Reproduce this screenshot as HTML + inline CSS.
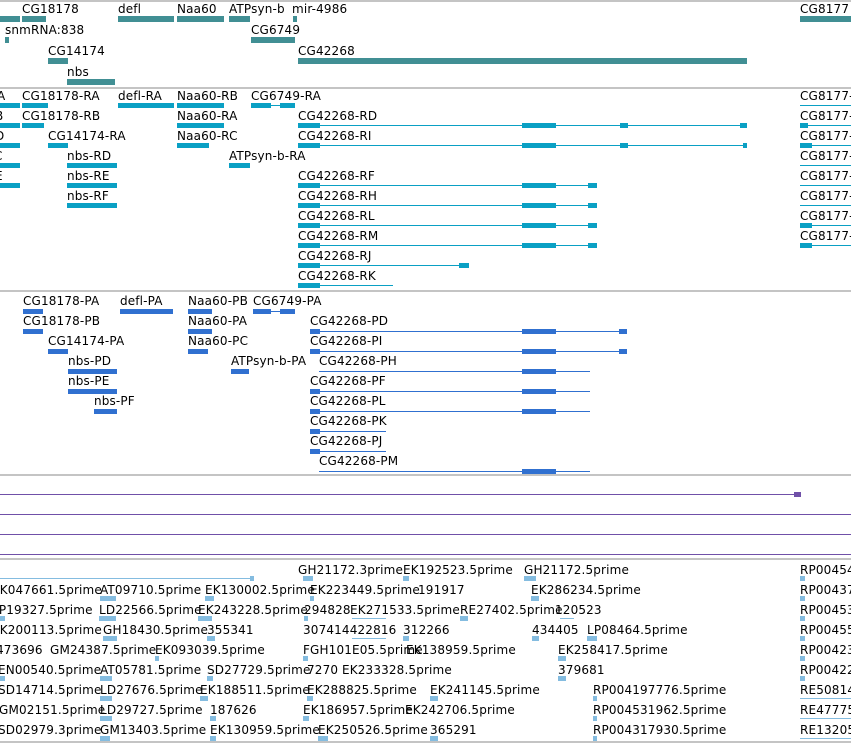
<!DOCTYPE html>
<html><head><meta charset="utf-8"><style>
body{margin:0;width:851px;height:743px;overflow:hidden;background:#fff;position:relative;font-family:"DejaVu Sans","Liberation Sans",sans-serif}
.t{position:absolute;font-size:12px;line-height:14px;white-space:nowrap;color:#000;margin-top:1px;letter-spacing:0.15px}
.b{position:absolute}
.w{position:absolute;left:0;top:0;width:851px;height:743px}
.g{position:absolute;left:0;width:851px;height:2px;background:#c4c4c4}
.c1{background:#418f94}.c2{background:#0aa0c4}.c3{background:#3070d0}.c5{background:#84bce0}.cp{background:#7050a8}
.h1{height:6px}.h2{height:5px}.ln{height:1px}
</style></head><body>
<div class="g" style="top:0"></div>
<div class="g" style="top:87px"></div>
<div class="g" style="top:290px"></div>
<div class="g" style="top:474px"></div>
<div class="g" style="top:558px"></div>
<div class="g" style="top:741px"></div>

<!-- track1 -->
<div class="t" style="left:22px;top:1px">CG18178</div>
<div class="t" style="left:118px;top:1px">defl</div>
<div class="t" style="left:177px;top:1px">Naa60</div>
<div class="t" style="left:229px;top:1px">ATPsyn-b</div>
<div class="t" style="left:292px;top:1px">mir-4986</div>
<div class="t" style="left:800px;top:1px">CG8177</div>
<div class="b c1 h1" style="left:0;top:16px;width:20px"></div>
<div class="b c1 h1" style="left:22px;top:16px;width:24px"></div>
<div class="b c1 h1" style="left:118px;top:16px;width:56px"></div>
<div class="b c1 h1" style="left:177px;top:16px;width:47px"></div>
<div class="b c1 h1" style="left:229px;top:16px;width:21px"></div>
<div class="b c1 h1" style="left:293px;top:16px;width:4px"></div>
<div class="b c1 h1" style="left:800px;top:16px;width:51px"></div>
<div class="t" style="left:5px;top:22px">snmRNA:838</div>
<div class="b c1 h1" style="left:5px;top:37px;width:4px"></div>
<div class="t" style="left:251px;top:22px">CG6749</div>
<div class="b c1 h1" style="left:251px;top:37px;width:44px"></div>
<div class="t" style="left:48px;top:43px">CG14174</div>
<div class="b c1 h1" style="left:48px;top:58px;width:20px"></div>
<div class="t" style="left:298px;top:43px">CG42268</div>
<div class="b c1 h1" style="left:298px;top:58px;width:449px"></div>
<div class="t" style="left:67px;top:64px">nbs</div>
<div class="b c1 h1" style="left:67px;top:79px;width:48px"></div>

<!-- track2 -->
<div class="t" style="left:-3px;top:88px">A</div>
<div class="t" style="left:22px;top:88px">CG18178-RA</div>
<div class="t" style="left:118px;top:88px">defl-RA</div>
<div class="t" style="left:177px;top:88px">Naa60-RB</div>
<div class="t" style="left:251px;top:88px">CG6749-RA</div>
<div class="b c2 h2" style="left:0;top:103px;width:20px"></div>
<div class="b c2 h2" style="left:22px;top:103px;width:26px"></div>
<div class="b c2 h2" style="left:118px;top:103px;width:56px"></div>
<div class="b c2 h2" style="left:177px;top:103px;width:47px"></div>
<div class="b c2 h2" style="left:251px;top:103px;width:20px"></div>
<div class="b c2 ln" style="left:271px;top:105px;width:24px"></div>
<div class="b c2 h2" style="left:280px;top:103px;width:15px"></div>

<div class="t" style="left:-5px;top:108px">B</div>
<div class="t" style="left:22px;top:108px">CG18178-RB</div>
<div class="t" style="left:177px;top:108px">Naa60-RA</div>
<div class="b c2 h2" style="left:0;top:123px;width:20px"></div>
<div class="b c2 h2" style="left:22px;top:123px;width:22px"></div>
<div class="b c2 h2" style="left:177px;top:123px;width:47px"></div>

<div class="t" style="left:-5px;top:128px">D</div>
<div class="t" style="left:48px;top:128px">CG14174-RA</div>
<div class="t" style="left:177px;top:128px">Naa60-RC</div>
<div class="b c2 h2" style="left:0;top:143px;width:20px"></div>
<div class="b c2 h2" style="left:48px;top:143px;width:20px"></div>
<div class="b c2 h2" style="left:177px;top:143px;width:32px"></div>

<div class="t" style="left:-6px;top:148px">C</div>
<div class="t" style="left:67px;top:148px">nbs-RD</div>
<div class="t" style="left:229px;top:148px">ATPsyn-b-RA</div>
<div class="b c2 h2" style="left:0;top:163px;width:20px"></div>
<div class="b c2 h2" style="left:67px;top:163px;width:50px"></div>
<div class="b c2 h2" style="left:229px;top:163px;width:21px"></div>
<div class="t" style="left:-5px;top:168px">E</div>
<div class="t" style="left:67px;top:168px">nbs-RE</div>
<div class="b c2 h2" style="left:0;top:183px;width:20px"></div>
<div class="b c2 h2" style="left:67px;top:183px;width:50px"></div>
<div class="t" style="left:67px;top:188px">nbs-RF</div>
<div class="b c2 h2" style="left:67px;top:203px;width:50px"></div>

<div class="t" style="left:298px;top:108px">CG42268-RD</div>
<div class="b c2 ln" style="left:298px;top:125px;width:449px"></div>
<div class="t" style="left:298px;top:128px">CG42268-RI</div>
<div class="b c2 ln" style="left:298px;top:145px;width:449px"></div>
<div class="t" style="left:298px;top:168px">CG42268-RF</div>
<div class="b c2 ln" style="left:298px;top:185px;width:299px"></div>
<div class="t" style="left:298px;top:188px">CG42268-RH</div>
<div class="b c2 ln" style="left:298px;top:205px;width:299px"></div>
<div class="t" style="left:298px;top:208px">CG42268-RL</div>
<div class="b c2 ln" style="left:298px;top:225px;width:299px"></div>
<div class="t" style="left:298px;top:228px">CG42268-RM</div>
<div class="b c2 ln" style="left:298px;top:245px;width:299px"></div>
<div class="t" style="left:298px;top:248px">CG42268-RJ</div>
<div class="b c2 ln" style="left:298px;top:265px;width:171px"></div>
<div class="b c2 h2" style="left:459px;top:263px;width:10px"></div>
<div class="t" style="left:298px;top:268px">CG42268-RK</div>
<div class="b c2 ln" style="left:298px;top:285px;width:95px"></div>
<div class="b c2 h2" style="left:298px;top:283px;width:22px"></div>
<div class="b c2 h2" style="left:298px;top:123px;width:22px"></div>
<div class="b c2 h2" style="left:298px;top:143px;width:22px"></div>
<div class="b c2 h2" style="left:298px;top:183px;width:22px"></div>
<div class="b c2 h2" style="left:298px;top:203px;width:22px"></div>
<div class="b c2 h2" style="left:298px;top:223px;width:22px"></div>
<div class="b c2 h2" style="left:298px;top:243px;width:22px"></div>
<div class="b c2 h2" style="left:298px;top:263px;width:22px"></div>
<div class="b c2 h2" style="left:522px;top:123px;width:34px"></div>
<div class="b c2 h2" style="left:522px;top:143px;width:34px"></div>
<div class="b c2 h2" style="left:522px;top:183px;width:34px"></div>
<div class="b c2 h2" style="left:522px;top:203px;width:34px"></div>
<div class="b c2 h2" style="left:522px;top:223px;width:34px"></div>
<div class="b c2 h2" style="left:522px;top:243px;width:34px"></div>
<div class="b c2 h2" style="left:588px;top:183px;width:9px"></div>
<div class="b c2 h2" style="left:588px;top:203px;width:9px"></div>
<div class="b c2 h2" style="left:588px;top:223px;width:9px"></div>
<div class="b c2 h2" style="left:588px;top:243px;width:9px"></div>
<div class="b c2 h2" style="left:620px;top:123px;width:8px"></div>
<div class="b c2 h2" style="left:620px;top:143px;width:8px"></div>
<div class="b c2 h2" style="left:740px;top:123px;width:7px"></div>
<div class="b c2 h2" style="left:743px;top:143px;width:4px"></div>

<div class="t" style="left:800px;top:88px">CG8177-</div>
<div class="t" style="left:800px;top:108px">CG8177-</div>
<div class="t" style="left:800px;top:128px">CG8177-</div>
<div class="t" style="left:800px;top:148px">CG8177-</div>
<div class="t" style="left:800px;top:168px">CG8177-</div>
<div class="t" style="left:800px;top:188px">CG8177-</div>
<div class="t" style="left:800px;top:208px">CG8177-</div>
<div class="t" style="left:800px;top:228px">CG8177-</div>
<div class="b c2 ln" style="left:800px;top:105px;width:51px"></div>
<div class="b c2 ln" style="left:800px;top:125px;width:51px"></div>
<div class="b c2 ln" style="left:800px;top:145px;width:51px"></div>
<div class="b c2 ln" style="left:800px;top:165px;width:51px"></div>
<div class="b c2 ln" style="left:800px;top:185px;width:51px"></div>
<div class="b c2 ln" style="left:800px;top:205px;width:51px"></div>
<div class="b c2 ln" style="left:800px;top:225px;width:51px"></div>
<div class="b c2 ln" style="left:800px;top:245px;width:51px"></div>
<div class="b c2 h2" style="left:800px;top:123px;width:8px"></div>
<div class="b c2 h2" style="left:800px;top:143px;width:12px"></div>
<div class="b c2 h2" style="left:800px;top:223px;width:12px"></div>
<div class="b c2 h2" style="left:800px;top:243px;width:12px"></div>

<!-- track3 -->
<div class="w" style="top:1px">
<div class="t" style="left:23px;top:292px">CG18178-PA</div>
<div class="t" style="left:120px;top:292px">defl-PA</div>
<div class="t" style="left:188px;top:292px">Naa60-PB</div>
<div class="t" style="left:253px;top:292px">CG6749-PA</div>
<div class="b c3 h2" style="left:23px;top:308px;width:20px"></div>
<div class="b c3 h2" style="left:120px;top:308px;width:53px"></div>
<div class="b c3 h2" style="left:188px;top:308px;width:24px"></div>
<div class="b c3 h2" style="left:253px;top:308px;width:18px"></div>
<div class="b c3 ln" style="left:271px;top:310px;width:24px"></div>
<div class="b c3 h2" style="left:280px;top:308px;width:15px"></div>
<div class="t" style="left:23px;top:312px">CG18178-PB</div>
<div class="t" style="left:188px;top:312px">Naa60-PA</div>
<div class="b c3 h2" style="left:23px;top:328px;width:20px"></div>
<div class="b c3 h2" style="left:188px;top:328px;width:24px"></div>
<div class="t" style="left:48px;top:332px">CG14174-PA</div>
<div class="t" style="left:188px;top:332px">Naa60-PC</div>
<div class="b c3 h2" style="left:48px;top:348px;width:20px"></div>
<div class="b c3 h2" style="left:188px;top:348px;width:20px"></div>
<div class="t" style="left:68px;top:352px">nbs-PD</div>
<div class="t" style="left:231px;top:352px">ATPsyn-b-PA</div>
<div class="b c3 h2" style="left:68px;top:368px;width:49px"></div>
<div class="b c3 h2" style="left:231px;top:368px;width:18px"></div>
<div class="t" style="left:68px;top:372px">nbs-PE</div>
<div class="b c3 h2" style="left:68px;top:388px;width:49px"></div>
<div class="t" style="left:94px;top:392px">nbs-PF</div>
<div class="b c3 h2" style="left:94px;top:408px;width:23px"></div>

<div class="t" style="left:310px;top:312px">CG42268-PD</div>
<div class="t" style="left:310px;top:332px">CG42268-PI</div>
<div class="t" style="left:319px;top:352px">CG42268-PH</div>
<div class="t" style="left:310px;top:372px">CG42268-PF</div>
<div class="t" style="left:310px;top:392px">CG42268-PL</div>
<div class="t" style="left:310px;top:412px">CG42268-PK</div>
<div class="t" style="left:310px;top:432px">CG42268-PJ</div>
<div class="t" style="left:319px;top:452px">CG42268-PM</div>
<div class="b c3 ln" style="left:310px;top:330px;width:317px"></div>
<div class="b c3 ln" style="left:310px;top:350px;width:317px"></div>
<div class="b c3 ln" style="left:319px;top:370px;width:271px"></div>
<div class="b c3 ln" style="left:310px;top:390px;width:280px"></div>
<div class="b c3 ln" style="left:310px;top:410px;width:280px"></div>
<div class="b c3 ln" style="left:310px;top:430px;width:76px"></div>
<div class="b c3 ln" style="left:310px;top:450px;width:76px"></div>
<div class="b c3 ln" style="left:319px;top:470px;width:271px"></div>
<div class="b c3 h2" style="left:310px;top:328px;width:10px"></div>
<div class="b c3 h2" style="left:310px;top:348px;width:10px"></div>
<div class="b c3 h2" style="left:310px;top:388px;width:10px"></div>
<div class="b c3 h2" style="left:310px;top:408px;width:10px"></div>
<div class="b c3 h2" style="left:310px;top:428px;width:10px"></div>
<div class="b c3 h2" style="left:310px;top:448px;width:10px"></div>
<div class="b c3 h2" style="left:522px;top:328px;width:34px"></div>
<div class="b c3 h2" style="left:522px;top:348px;width:34px"></div>
<div class="b c3 h2" style="left:522px;top:368px;width:34px"></div>
<div class="b c3 h2" style="left:522px;top:388px;width:34px"></div>
<div class="b c3 h2" style="left:522px;top:408px;width:34px"></div>
<div class="b c3 h2" style="left:522px;top:468px;width:34px"></div>
<div class="b c3 h2" style="left:619px;top:328px;width:8px"></div>
<div class="b c3 h2" style="left:619px;top:348px;width:8px"></div>
</div>

<!-- purple -->
<div class="b cp ln" style="left:0;top:494px;width:800px"></div>
<div class="b cp h2" style="left:794px;top:492px;width:7px"></div>
<div class="b cp ln" style="left:0;top:514px;width:851px"></div>
<div class="b cp ln" style="left:0;top:534px;width:851px"></div>
<div class="b cp ln" style="left:0;top:554px;width:851px"></div>

<!-- track5 -->
<div class="w" style="top:1px">
<div class="b c5 ln" style="left:0;top:577px;width:253px"></div>
<div class="t" style="left:298px;top:561px">GH21172.3prime</div>
<div class="t" style="left:403px;top:561px">EK192523.5prime</div>
<div class="t" style="left:524px;top:561px">GH21172.5prime</div>
<div class="t" style="left:800px;top:561px">RP00454</div>
<div class="t" style="left:-8px;top:581px">EK047661.5prime</div>
<div class="t" style="left:100px;top:581px">AT09710.5prime</div>
<div class="t" style="left:205px;top:581px">EK130002.5prime</div>
<div class="t" style="left:310px;top:581px">EK223449.5prime</div>
<div class="t" style="left:418px;top:581px">191917</div>
<div class="t" style="left:531px;top:581px">EK286234.5prime</div>
<div class="t" style="left:800px;top:581px">RP00437</div>
<div class="t" style="left:-8px;top:601px">LP19327.5prime</div>
<div class="t" style="left:99px;top:601px">LD22566.5prime</div>
<div class="t" style="left:198px;top:601px">EK243228.5prime</div>
<div class="t" style="left:304px;top:601px">294828</div>
<div class="t" style="left:350px;top:601px">EK271533.5prime</div>
<div class="t" style="left:460px;top:601px">RE27402.5prime</div>
<div class="t" style="left:555px;top:601px">120523</div>
<div class="t" style="left:800px;top:601px">RP00453</div>
<div class="t" style="left:-8px;top:621px">EK200113.5prime</div>
<div class="t" style="left:103px;top:621px">GH18430.5prime</div>
<div class="t" style="left:207px;top:621px">355341</div>
<div class="t" style="left:303px;top:621px">307414422816</div>
<div class="t" style="left:403px;top:621px">312266</div>
<div class="t" style="left:532px;top:621px">434405</div>
<div class="t" style="left:587px;top:621px">LP08464.5prime</div>
<div class="t" style="left:800px;top:621px">RP00455</div>
<div class="t" style="left:-4px;top:641px">473696</div>
<div class="t" style="left:50px;top:641px">GM24387.5prime</div>
<div class="t" style="left:155px;top:641px">EK093039.5prime</div>
<div class="t" style="left:303px;top:641px">FGH101E05.5prime</div>
<div class="t" style="left:406px;top:641px">EK138959.5prime</div>
<div class="t" style="left:558px;top:641px">EK258417.5prime</div>
<div class="t" style="left:800px;top:641px">RP00423</div>
<div class="t" style="left:-2px;top:661px">EN00540.5prime</div>
<div class="t" style="left:100px;top:661px">AT05781.5prime</div>
<div class="t" style="left:207px;top:661px">SD27729.5prime</div>
<div class="t" style="left:307px;top:661px">7270</div>
<div class="t" style="left:342px;top:661px">EK233328.5prime</div>
<div class="t" style="left:558px;top:661px">379681</div>
<div class="t" style="left:800px;top:661px">RP00422</div>
<div class="t" style="left:-2px;top:681px">SD14714.5prime</div>
<div class="t" style="left:100px;top:681px">LD27676.5prime</div>
<div class="t" style="left:200px;top:681px">EK188511.5prime</div>
<div class="t" style="left:307px;top:681px">EK288825.5prime</div>
<div class="t" style="left:430px;top:681px">EK241145.5prime</div>
<div class="t" style="left:593px;top:681px">RP004197776.5prime</div>
<div class="t" style="left:800px;top:681px">RE50814</div>
<div class="t" style="left:-1px;top:701px">GM02151.5prime</div>
<div class="t" style="left:100px;top:701px">LD29727.5prime</div>
<div class="t" style="left:210px;top:701px">187626</div>
<div class="t" style="left:303px;top:701px">EK186957.5prime</div>
<div class="t" style="left:405px;top:701px">EK242706.5prime</div>
<div class="t" style="left:593px;top:701px">RP004531962.5prime</div>
<div class="t" style="left:800px;top:701px">RE47775</div>
<div class="t" style="left:-2px;top:721px">SD02979.3prime</div>
<div class="t" style="left:100px;top:721px">GM13403.5prime</div>
<div class="t" style="left:210px;top:721px">EK130959.5prime</div>
<div class="t" style="left:318px;top:721px">EK250526.5prime</div>
<div class="t" style="left:430px;top:721px">365291</div>
<div class="t" style="left:593px;top:721px">RP004317930.5prime</div>
<div class="t" style="left:800px;top:721px">RE13205</div>

<div class="b c5 h2" style="left:250px;top:575px;width:4px"></div>
<div class="b c5 h2" style="left:303px;top:575px;width:10px"></div>
<div class="b c5 h2" style="left:403px;top:575px;width:6px"></div>
<div class="b c5 h2" style="left:524px;top:575px;width:12px"></div>
<div class="b c5 h2" style="left:800px;top:575px;width:5px"></div>
<div class="b c5 h2" style="left:100px;top:595px;width:16px"></div>
<div class="b c5 h2" style="left:205px;top:595px;width:9px"></div>
<div class="b c5 h2" style="left:310px;top:595px;width:4px"></div>
<div class="b c5 h2" style="left:531px;top:595px;width:8px"></div>
<div class="b c5 h2" style="left:800px;top:595px;width:5px"></div>
<div class="b c5 h2" style="left:0;top:615px;width:5px"></div>
<div class="b c5 h2" style="left:99px;top:615px;width:17px"></div>
<div class="b c5 h2" style="left:198px;top:615px;width:14px"></div>
<div class="b c5 h2" style="left:304px;top:615px;width:4px"></div>
<div class="b c5 ln" style="left:352px;top:617px;width:34px"></div>
<div class="b c5 h2" style="left:460px;top:615px;width:8px"></div>
<div class="b c5 ln" style="left:560px;top:617px;width:14px"></div>
<div class="b c5 h2" style="left:800px;top:615px;width:5px"></div>
<div class="b c5 h2" style="left:103px;top:635px;width:14px"></div>
<div class="b c5 h2" style="left:207px;top:635px;width:8px"></div>
<div class="b c5 ln" style="left:352px;top:637px;width:34px"></div>
<div class="b c5 h2" style="left:403px;top:635px;width:6px"></div>
<div class="b c5 h2" style="left:532px;top:635px;width:7px"></div>
<div class="b c5 h2" style="left:587px;top:635px;width:10px"></div>
<div class="b c5 h2" style="left:800px;top:635px;width:5px"></div>
<div class="b c5 h2" style="left:155px;top:655px;width:4px"></div>
<div class="b c5 h2" style="left:303px;top:655px;width:5px"></div>
<div class="b c5 h2" style="left:558px;top:655px;width:8px"></div>
<div class="b c5 h2" style="left:800px;top:655px;width:5px"></div>
<div class="b c5 h2" style="left:0;top:675px;width:5px"></div>
<div class="b c5 h2" style="left:100px;top:675px;width:12px"></div>
<div class="b c5 h2" style="left:207px;top:675px;width:6px"></div>
<div class="b c5 h2" style="left:558px;top:675px;width:8px"></div>
<div class="b c5 h2" style="left:800px;top:675px;width:5px"></div>
<div class="b c5 h2" style="left:100px;top:695px;width:12px"></div>
<div class="b c5 h2" style="left:200px;top:695px;width:8px"></div>
<div class="b c5 h2" style="left:307px;top:695px;width:6px"></div>
<div class="b c5 h2" style="left:430px;top:695px;width:8px"></div>
<div class="b c5 h2" style="left:593px;top:695px;width:4px"></div>
<div class="b c5 ln" style="left:800px;top:697px;width:51px"></div>
<div class="b c5 h2" style="left:100px;top:715px;width:12px"></div>
<div class="b c5 h2" style="left:210px;top:715px;width:6px"></div>
<div class="b c5 h2" style="left:303px;top:715px;width:6px"></div>
<div class="b c5 h2" style="left:593px;top:715px;width:4px"></div>
<div class="b c5 ln" style="left:800px;top:717px;width:51px"></div>
<div class="b c5 h2" style="left:100px;top:735px;width:10px"></div>
<div class="b c5 h2" style="left:210px;top:735px;width:6px"></div>
<div class="b c5 h2" style="left:318px;top:735px;width:10px"></div>
<div class="b c5 h2" style="left:430px;top:735px;width:8px"></div>
<div class="b c5 h2" style="left:593px;top:735px;width:4px"></div>
<div class="b c5 ln" style="left:800px;top:737px;width:51px"></div>
</div>
</body></html>
